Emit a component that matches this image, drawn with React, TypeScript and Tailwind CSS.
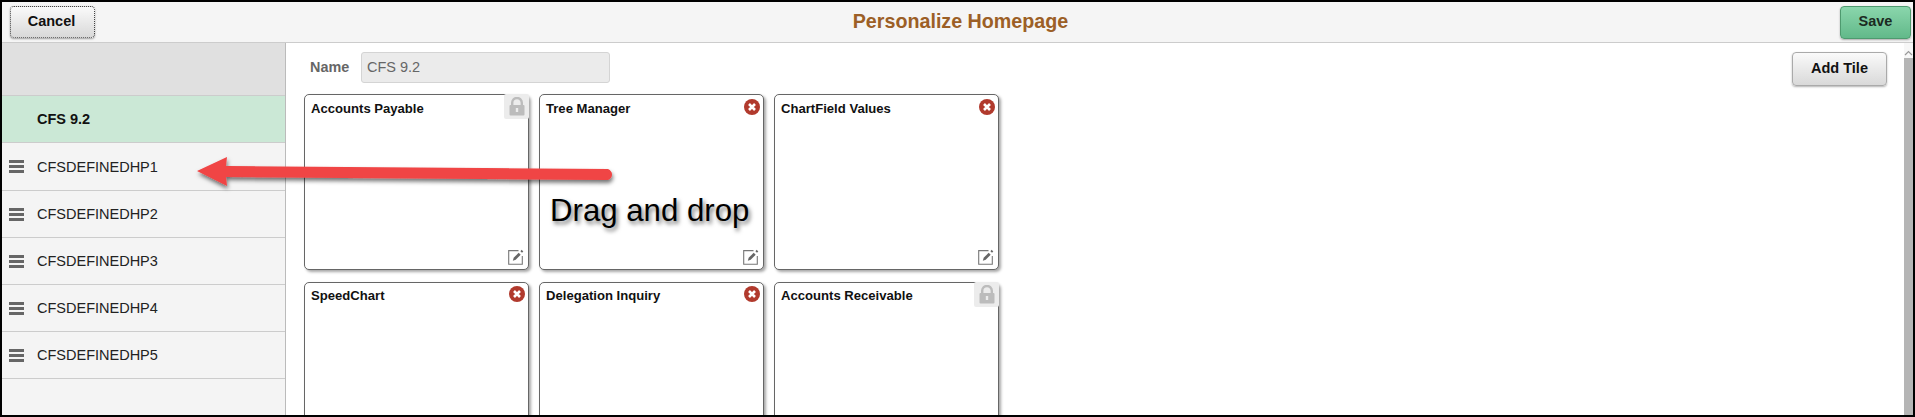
import React from "react";

const LockIcon = () => (
  <svg width="16" height="19" viewBox="0 0 16 19">
    <path d="M3.2 9V5.8a4.8 4.8 0 0 1 9.6 0V9" fill="none" stroke="#bcbcbc" strokeWidth="2.4" />
    <rect x="0.5" y="8" width="15" height="10.5" rx="1" fill="#bcbcbc" />
    <rect x="6.8" y="11" width="2.4" height="4" fill="#ececec" />
  </svg>
);

const RemoveIcon = () => (
  <svg width="16" height="16" viewBox="0 0 16 16">
    <circle cx="8" cy="8" r="8" fill="#b13a2d" />
    <path d="M5 5l6 6M11 5l-6 6" stroke="#fff" strokeWidth="2.6" strokeLinecap="butt" />
  </svg>
);

const EditIcon = () => (
  <svg width="17" height="17" viewBox="0 0 17 17">
    <path d="M10.5 2.6H0.7V16.3H14.3V8" fill="none" stroke="#777" strokeWidth="1.1" />
    <path d="M4.8 12.7l0.9-2.9 5-5 2 2-5 5z" fill="#666" />
    <path d="M12.4 3.2l1.3-1.4 1.6 1.6-1.3 1.4z" fill="#666" />
  </svg>
);

type TileProps = { title: string; locked?: boolean; edit?: boolean; first?: boolean };

const Tile = ({ title, locked, edit, first }: TileProps) => (
  <div className="relative h-[176px] w-[225px] rounded-[5px] border border-[#666] bg-white shadow-[2px_2px_3px_rgba(0,0,0,0.35)]">
    <div className={`pl-[6px] text-[13.1px] leading-[16px] font-bold text-[#111] ${first ? "pt-[6px]" : "pt-[5px]"}`}>
      {title}
    </div>
    {locked ? (
      <div className="absolute -right-px -top-px flex h-[25px] w-[25px] items-center justify-center rounded-[2px] bg-[#ececec]">
        <LockIcon />
      </div>
    ) : (
      <div className={`absolute right-[3px] flex ${first ? "top-[4px]" : "top-[3px]"}`}>
        <RemoveIcon />
      </div>
    )}
    {edit && (
      <div className="absolute bottom-[4px] right-[3px] flex">
        <EditIcon />
      </div>
    )}
  </div>
);

const Hamburger = () => (
  <div className="flex w-[15px] flex-col gap-[2px]">
    <div className="h-[3px] bg-[#666]" />
    <div className="h-[3px] bg-[#666]" />
    <div className="h-[3px] bg-[#666]" />
  </div>
);

const rows = ["CFSDEFINEDHP1", "CFSDEFINEDHP2", "CFSDEFINEDHP3", "CFSDEFINEDHP4", "CFSDEFINEDHP5"];

export default function App() {
  return (
    <div className="relative flex h-[417px] w-[1915px] flex-col overflow-hidden bg-black p-[2px] font-['Liberation_Sans',Arial,sans-serif] text-[14.5px]">
      <header className="grid h-[41px] shrink-0 grid-cols-[1fr_auto_1fr] items-center border-b border-[#ccc] bg-[#f5f5f5] pl-[8px] pr-[2px]">
        <div className="flex">
          <button className="flex h-[32px] w-[85px] items-center justify-center rounded-[4px] border border-dotted border-[#444] bg-linear-to-b from-[#fafafa] to-[#d9d9d9] pr-[2px] font-bold text-[#111] shadow-[0_1px_2px_rgba(0,0,0,0.35)]">
            Cancel
          </button>
        </div>
        <div className="text-[19.7px] font-bold text-[#9c5f26]">Personalize Homepage</div>
        <div className="flex justify-end">
          <button className="flex h-[33px] w-[71px] items-center justify-center rounded-[4px] border border-[#4e9a6f] bg-linear-to-b from-[#8ad6ac] to-[#62b98a] font-bold text-[#1b2a22] shadow-[0_1px_2px_rgba(0,0,0,0.3)]">
            Save
          </button>
        </div>
      </header>

      <div className="flex min-h-0 flex-1">
        <aside className="flex w-[284px] shrink-0 flex-col border-r border-[#bbb] bg-[#f4f4f4]">
          <div className="h-[53px] shrink-0 border-b border-[#ccc] bg-[#e0e0e0]" />
          <div className="flex h-[47px] shrink-0 items-center border-b border-[#ccc] bg-[#cbe8d6] pl-[35px] font-bold text-[#111]">
            <span className="mt-[2px]">CFS 9.2</span>
          </div>
          {rows.map((r, i) => (
            <div
              key={r}
              className={`flex shrink-0 items-center border-b border-[#ccc] pl-[7px] text-[#222] ${i === 0 ? "h-[48px]" : "h-[47px]"}`}
            >
              <Hamburger />
              <span className="ml-[13px] mt-[2px]">{r}</span>
            </div>
          ))}
        </aside>

        <main className="min-w-0 flex-1 overflow-hidden bg-white pl-[18px] pr-[17px] pt-[9px]">
          <div className="mb-[8px] flex h-[34px] items-start justify-between">
            <div className="flex items-center">
              <label className="ml-[6px] w-[51px] text-[14.4px] font-bold text-[#666]">Name</label>
              <div className="flex h-[31px] w-[249px] items-center rounded-[3px] border border-[#d4d4d4] bg-[#ebebeb] pl-[5px] text-[#666]">
                CFS 9.2
              </div>
            </div>
            <button className="flex h-[34px] w-[95px] items-center justify-center rounded-[4px] border border-[#aaa] bg-linear-to-b from-[#fafafa] to-[#d9d9d9] font-bold text-[#111] shadow-[0_1px_2px_rgba(0,0,0,0.3)]">
              Add Tile
            </button>
          </div>
          <div className="grid grid-cols-[repeat(3,225px)] gap-x-[10px] gap-y-[12px]">
            <Tile title="Accounts Payable" locked edit first />
            <Tile title="Tree Manager" edit first />
            <Tile title="ChartField Values" edit first />
            <Tile title="SpeedChart" />
            <Tile title="Delegation Inquiry" />
            <Tile title="Accounts Receivable" locked />
          </div>
        </main>

        <div className="flex w-[9px] shrink-0 flex-col bg-[#f7f7f7]">
          <div className="flex h-[15px] shrink-0 items-end justify-center pb-[2px]">
            <svg width="9" height="6" viewBox="0 0 9 6">
              <path d="M1 5l3.5-3.5L8 5" fill="none" stroke="#999" strokeWidth="1.2" />
            </svg>
          </div>
          <div className="flex-1 bg-[#b5b5b5]" />
        </div>
      </div>

      <svg className="absolute left-0 top-0" width="1915" height="417" viewBox="0 0 1915 417">
        <defs>
          <filter id="arrowShadow" x="-5%" y="-50%" width="110%" height="200%">
            <feDropShadow dx="1" dy="3" stdDeviation="2.2" floodColor="#000" floodOpacity="0.55" />
          </filter>
        </defs>
        <path
          d="M197 171L227 157L226 166L608 169Q612 171 612 174.500Q612 178 608 180L226 177L227 186Z"
          fill="#f04444"
          filter="url(#arrowShadow)"
        />
      </svg>
      <div className="absolute left-[550px] top-[193px] text-[31.2px] leading-[36px] text-black [text-shadow:2px_3px_4px_rgba(0,0,0,0.55)]">
        Drag and drop
      </div>
    </div>
  );
}
